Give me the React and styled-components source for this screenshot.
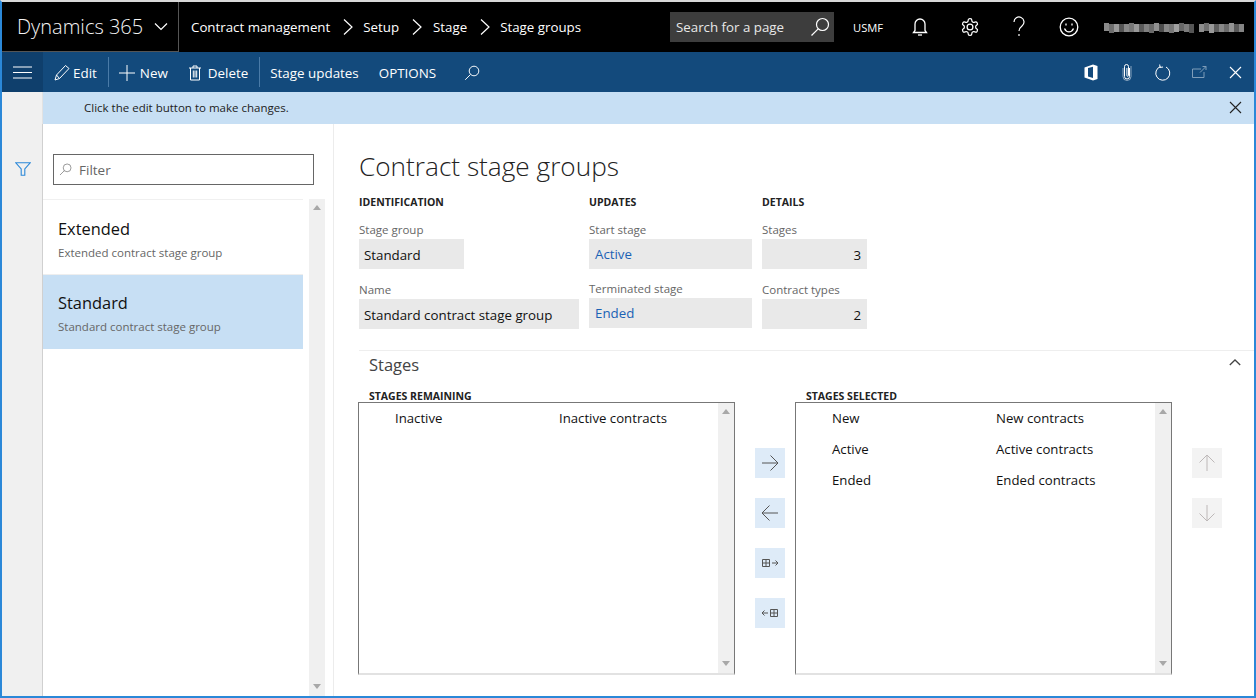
import React from "react";
import styled, { createGlobalStyle } from "styled-components";

const Global = createGlobalStyle`
  html, body { margin: 0; padding: 0; background: #fff; }
  body { font-family: "Open Sans", "Noto Sans", "Liberation Sans", sans-serif; color: #111; overflow: hidden; }
  * { box-sizing: border-box; }
`;

const Frame = styled.div`
  width: 1256px; height: 698px; display: flex; flex-direction: column; overflow: hidden;
  background: #fff; border-left: 2px solid #2b88d8; border-right: 2px solid #2b88d8; border-bottom: 2px solid #2b88d8; border-top: 2px solid #d8d8d8;
`;
const TopBar = styled.header`
  height: 50px; flex: none; background: #000; color: #fff; display: flex; align-items: center; margin-left: -1px; margin-right: -1px;
`;
const Brand = styled.div`
  width: 178px; height: 50px; flex: none; display: flex; align-items: center; padding-left: 15px; border: 1px solid #555; border-top: 0;
  font-size: 20px; font-weight: 300; color: #f4f4f4;
  svg { margin-left: 11px; }
`;
const Crumbs = styled.nav`
  display: flex; align-items: center; margin-left: 12px; font-size: 13.3px; width: 479px;
`;
const Crumb = styled.span` white-space: nowrap; `;
const CrumbSep = styled.span` display: flex; width: ${p => p.$w}px; justify-content: center; `;
const SearchBox = styled.div`
  width: 164px; height: 30px; flex: none; background: #3d3d3d; display: flex; align-items: center; justify-content: space-between; padding: 0 4px 0 6px;
  font-size: 13.3px; color: #e8e8e8; margin-top: 0;
`;
const Company = styled.span` font-size: 11.200px; margin-left: 19px; width: 33px; `;
const TopIcon = styled.span` display: flex; justify-content: center; width: ${p => p.$w || 50}px; margin-left: ${p => p.$ml || 0}px; `;
const Blur = styled.svg` margin-left: 9px; flex: none; margin-top: 1px; `;

const ActionBar = styled.div`
  height: 40px; flex: none; background: #134a7c; color: #fff; display: flex; align-items: center; font-size: 13.4px;
`;
const Hamburger = styled.div`
  width: 41px; height: 40px; flex: none; background: #0f3f6c; display: flex; align-items: center; justify-content: center;
`;
const Action = styled.span`
  display: flex; align-items: center; gap: ${p => p.$gap ?? 5}px; white-space: nowrap; margin-left: ${p => p.$ml || 0}px; flex: none; line-height: 20px; padding-top: 1px;
`;
const ActionSep = styled.span` width: 1px; height: 30px; background: #4a7ba8; flex: none; margin-left: ${p => p.$ml}px; `;
const ActionRight = styled.div` margin-left: auto; display: flex; align-items: center; margin-right: 1px; `;
const RightIcon = styled.span` width: 36px; display: flex; justify-content: center; `;

const Notice = styled.div`
  height: 32px; flex: none; display: flex;
`;
const NoticeGap = styled.div` width: 41px; background: #f0f0f0; flex: none; border-right: 1px solid #e2e2e2; `;
const NoticeBody = styled.div`
  flex: 1; background: #c7dff4; display: flex; align-items: center; justify-content: space-between; padding: 0 12px 1px 41px; font-size: 11.5px; color: #222;
`;

const Main = styled.div` flex: 1; display: flex; min-height: 0; `;
const Rail = styled.div`
  width: 41px; flex: none; background: #f0f0f0; border-right: 1px solid #d0d0d0; display: flex; justify-content: center; padding: 38px 0 0 2px;
`;
const ListPane = styled.aside`
  width: 291px; flex: none; border-right: 1px solid #ececec; display: flex; flex-direction: column;
`;
const FilterWrap = styled.div` height: 75px; flex: none; padding: 30px 0 0 10px; `;
const Filter = styled.div`
  width: 261px; height: 31px; border: 1px solid #666; display: flex; align-items: center; gap: 7px; padding-left: 5px; font-size: 13.5px; color: #666;
`;
const ListBody = styled.div` flex: 1; display: flex; min-height: 0; `;
const Items = styled.div` width: 260px; flex: none; border-top: 1px solid #f0f0f0; `;
const Item = styled.div`
  height: ${p => p.$h}px; padding: ${p => p.$on ? 15 : 16}px 0 0 15px; background: ${p => p.$on ? "#c7dff4" : "#fff"};
  border-bottom: 1px solid ${p => p.$on ? "#c7dff4" : "#eeeeee"};
`;
const ItemTitle = styled.div` font-size: 16.4px; line-height: 26px; color: #111; `;
const ItemSub = styled.div` font-size: 11.5px; line-height: 20px; color: #666; padding-top: 1px; `;
const Scroll = styled.div`
  width: ${p => p.$w}px; flex: none; background: ${p => p.$bg || "#f0f0f0"}; margin-left: ${p => p.$ml || 0}px; display: flex; flex-direction: column; align-items: center; justify-content: space-between;
  padding: 6px 0 7px;
`;
const ArrowUp = styled.span` width: 0; height: 0; border: 4px solid transparent; border-top: 0; border-bottom: 5px solid #a8a8a8; `;
const ArrowDown = styled.span` width: 0; height: 0; border: 4px solid transparent; border-bottom: 0; border-top: 5px solid #a8a8a8; `;

const Content = styled.main` flex: 1; padding: 22px 0 0 25px; min-width: 0; `;
const Title = styled.h1` margin: 0; font-weight: 300; font-size: 26.2px; line-height: 40px; color: #222; white-space: nowrap; `;
const FieldGrid = styled.div` display: flex; margin-top: 9px; `;
const Col = styled.div` width: ${p => p.$w}px; flex: none; `;
const GroupHead = styled.div` font-size: 10.5px; font-weight: 700; line-height: 14px; color: #222; margin-bottom: 14px; white-space: nowrap; `;
const Label = styled.div` font-size: 11.5px; line-height: 14px; color: #666; margin-bottom: 2px; white-space: nowrap; `;
const Value = styled.div`
  width: ${p => p.$w}px; height: 30px; background: #e9e9e9; display: flex; align-items: center; padding: ${p => p.$link ? 0 : 1}px 6px 0 ${p => p.$link ? 6 : 5}px;
  font-size: 13.3px; white-space: nowrap; color: ${p => p.$link ? "#1b62b5" : "#111"}; justify-content: ${p => p.$num ? "flex-end" : "flex-start"};
  margin-bottom: ${p => p.$mb ?? 14}px;
`;
const Section = styled.section` border-top: 1px solid #eee; margin-top: 21px; `;
const SectionHead = styled.div`
  height: 37px; display: flex; align-items: center; justify-content: space-between; padding: 0 13px 11px 10px; font-size: 16.5px; color: #444;
  svg { margin-bottom: 4px; }
`;
const Columns = styled.div` display: flex; align-items: flex-start; margin-left: -1px; `;
const Picker = styled.div` width: 377px; flex: none; `;
const PickHead = styled.div` font-size: 10.5px; font-weight: 700; line-height: 14px; padding-left: 11px; color: #222; margin-top: 1px; white-space: nowrap; `;
const PickBox = styled.div`
  height: 273px; display: flex; border: 1px solid #777; border-bottom: 2px solid #e2e2e2; margin-top: -1px; background: #fff;
`;
const Rows = styled.div` flex: 1; margin-top: -1px; `;
const Row = styled.div` height: 31px; display: flex; align-items: center; font-size: 13.2px; color: #111; `;
const CellA = styled.span` width: 200px; padding-left: 36px; flex: none; `;
const Transfer = styled.div`
  width: 60px; flex: none; display: flex; flex-direction: column; align-items: flex-start; gap: 20px; padding: 60px 0 0 20px;
`;
const Mover = styled.div`
  width: 30px; height: 30px; background: ${p => p.$off ? "#f3f3f3" : "#deebf8"}; display: flex; align-items: center; justify-content: center;
`;

const Chev = ({ s = 14, c = "#fff", w = 1.2 }) => (
  <svg width={s} height={s + 6} viewBox="0 0 14 20" fill="none" stroke={c} strokeWidth={w}><path d="M4 2.5 12 10 4 17.5" /></svg>
);
const Magnifier = ({ s = 20, c = "#fff", w = 1.2 }) => (
  <svg width={s} height={s} viewBox="0 0 20 20" fill="none" stroke={c} strokeWidth={w}><circle cx="12.5" cy="7.5" r="6" /><path d="M8.2 11.8 1.5 18.5" /></svg>
);
const Cross = ({ s = 13, c = "#fff" }) => (
  <svg width={s} height={s} viewBox="0 0 13 13" fill="none" stroke={c} strokeWidth="1.1"><path d="M1 1 12 12M12 1 1 12" /></svg>
);
const Arrow = ({ dir, c = "#555" }) => {
  const r = { right: 0, down: 90, left: 180, up: 270 }[dir];
  return <svg width="18" height="18" viewBox="0 0 18 18" fill="none" stroke={c} strokeWidth="1" style={{ transform: `rotate(${r}deg)` }}><path d="M1 9H17M9.5 1.5 17 9 9.5 16.5" /></svg>;
};
const Bulk = ({ flip }) => (
  <svg width="18" height="10" viewBox="0 0 18 10" fill="none" stroke="#555" strokeWidth="1">
    {flip ? <><path d="M7 5H1M3.5 2.5 1 5 3.5 7.5" /><path d="M9.5 1.5h7v7h-7zM13 1.5v7M9.5 5h7" /></>
      : <><path d="M1.5 1.5h7v7h-7zM5 1.5v7M1.5 5h7" /><path d="M11 5h6M14.5 2.5 17 5 14.5 7.5" /></>}
  </svg>
);
const blurCols = ["#8a8a8a","#6e6e6e","#9a9a9a","#555","#888","#777","#999","#5a5a5a","#808080","#6a6a6a","#909090","#4e4e4e","#888","#777","#a0a0a0","#666","#7c7c7c","#555","#000","#8e8e8e","#707070","#999","#5e5e5e","#888","#6b6b6b","#929292","#585858","#848484"];

const Remaining = [["Inactive", "Inactive contracts"]];
const Selected = [["New", "New contracts"], ["Active", "Active contracts"], ["Ended", "Ended contracts"]];

const ListBox = ({ head, rows }) => (
  <Picker>
    <PickHead>{head}</PickHead>
    <PickBox>
      <Rows>{rows.map(r => <Row key={r[0]}><CellA>{r[0]}</CellA><span>{r[1]}</span></Row>)}</Rows>
      <Scroll $w={16}><ArrowUp /><ArrowDown /></Scroll>
    </PickBox>
  </Picker>
);

export default function App() {
  return (
    <Frame>
      <Global />
      <TopBar>
        <Brand>Dynamics 365
          <svg width="14" height="9" viewBox="0 0 14 9" fill="none" stroke="#fff" strokeWidth="1.2"><path d="M1 1.5 7 7.5 13 1.5" /></svg>
        </Brand>
        <Crumbs>
          <Crumb>Contract management</Crumb><CrumbSep $w={33}><Chev /></CrumbSep>
          <Crumb>Setup</Crumb><CrumbSep $w={34}><Chev /></CrumbSep>
          <Crumb>Stage</Crumb><CrumbSep $w={33}><Chev /></CrumbSep>
          <Crumb>Stage groups</Crumb>
        </Crumbs>
        <SearchBox>Search for a page<Magnifier /></SearchBox>
        <Company>USMF</Company>
        <TopIcon $ml={9}>
          <svg width="16" height="20" viewBox="0 0 16 20" fill="none" stroke="#fff" strokeWidth="1.3"><path d="M1.5 15.5H14.5L13 13.5V7a5 5 0 0 0-10 0v6.5z" /><path d="M6 18h4" /></svg>
        </TopIcon>
        <TopIcon>
          <svg width="20" height="20" viewBox="0 0 24 24" fill="none" stroke="#fff" strokeWidth="1.5" strokeLinejoin="round"><path d="M12.2 2h-.4a2 2 0 0 0-2 2v.2a2 2 0 0 1-1 1.7l-.4.3a2 2 0 0 1-2 0l-.2-.1a2 2 0 0 0-2.7.7l-.2.4a2 2 0 0 0 .7 2.7l.2.1a2 2 0 0 1 1 1.7v.6a2 2 0 0 1-1 1.7l-.2.1a2 2 0 0 0-.7 2.7l.2.4a2 2 0 0 0 2.7.7l.2-.1a2 2 0 0 1 2 0l.4.3a2 2 0 0 1 1 1.7v.2a2 2 0 0 0 2 2h.4a2 2 0 0 0 2-2v-.2a2 2 0 0 1 1-1.7l.4-.3a2 2 0 0 1 2 0l.2.1a2 2 0 0 0 2.7-.7l.2-.4a2 2 0 0 0-.7-2.7l-.2-.1a2 2 0 0 1-1-1.7v-.6a2 2 0 0 1 1-1.7l.2-.1a2 2 0 0 0 .7-2.7l-.2-.4a2 2 0 0 0-2.7-.7l-.2.1a2 2 0 0 1-2 0l-.4-.3a2 2 0 0 1-1-1.7V4a2 2 0 0 0-2-2z" /><circle cx="12" cy="12" r="3.5" /></svg>
        </TopIcon>
        <TopIcon $w={48}>
          <svg width="14" height="22" viewBox="0 0 14 22" fill="none" stroke="#fff" strokeWidth="1.2"><path d="M2 6a5 5 0 1 1 8.2 3.8C8 11.6 7 12.6 7 15" /><path d="M7 18v2" /></svg>
        </TopIcon>
        <TopIcon $w={52}>
          <svg width="20" height="20" viewBox="0 0 20 20" fill="none" stroke="#fff" strokeWidth="1.3"><circle cx="10" cy="10" r="8.8" /><path d="M5.500 11.500c1 2.400 2.600 3.400 4.500 3.400s3.500-1 4.500-3.400" /><path d="M7 6.500v2M13 6.500v2" /></svg>
        </TopIcon>
        <Blur width="141" height="12" viewBox="0 0 141 12">
          {blurCols.map((c, i) => <rect key={i} x={i * 5} y={i % 5 === 0 ? 1 : 2} width={i === 18 ? 2 : 5} height={i % 4 === 1 ? 9 : 8} fill={c} />)}
        </Blur>
      </TopBar>

      <ActionBar>
        <Hamburger>
          <svg width="19" height="13" viewBox="0 0 19 13" stroke="#fff" strokeWidth="1.2"><path d="M0 1H19M0 6.500H19M0 12H19" /></svg>
        </Hamburger>
        <Action $ml={11} $gap={3}>
          <svg width="16" height="17" viewBox="0 0 16 17" fill="none" stroke="#fff" strokeWidth="1"><path d="M1 16 2.500 11 11.500 1.500 15 4.500 5.500 14.500zM2.500 11 5.500 14.500" /></svg>Edit
        </Action>
        <ActionSep $ml={11} />
        <Action $ml={10} $gap={5}>
          <svg width="16" height="16" viewBox="0 0 16 16" stroke="#fff" strokeWidth="1"><path d="M8 0V16M0 8H16" /></svg>New
        </Action>
        <Action $ml={20} $gap={6}>
          <svg width="14" height="16" viewBox="0 0 14 16" fill="none" stroke="#fff" strokeWidth="1"><path d="M1 3H13M5 3V1h4v2M2.500 3v12h9V3M5.300 5.500v7M7 5.500v7M8.700 5.500v7" /></svg>Delete
        </Action>
        <ActionSep $ml={11} />
        <Action $ml={10}>Stage updates</Action>
        <Action $ml={20}>OPTIONS</Action>
        <Action $ml={28}><Magnifier s={16} /></Action>
        <ActionRight>
          <RightIcon>
            <svg width="14" height="17" viewBox="0 0 14 17"><path d="M0.500 3.500 9 0.500 13.500 2V15L9 16.500 0.500 13.500zM9 2.800 4 4V12.500L9 14z" fill="#fff" fillRule="evenodd" /></svg>
          </RightIcon>
          <RightIcon>
            <svg width="10" height="18" viewBox="0 0 10 18" fill="none" stroke="#fff" strokeWidth="1"><path d="M7.500 5v8.500a2.500 2.500 0 0 1-5 0V3.500a2 2 0 0 1 4 0V12.500a.8.8 0 0 1-1.600 0V5" /><path d="M1 5v8.500a4 4 0 0 0 8 0V3" strokeOpacity=".5" /></svg>
          </RightIcon>
          <RightIcon>
            <svg width="16" height="17" viewBox="0 0 16 17" fill="none" stroke="#fff" strokeWidth="1"><path d="M5.500 2.600A7 7 0 1 0 11 3" /><path d="M5 .5V3.500H8" transform="rotate(-8 5 3)" /></svg>
          </RightIcon>
          <RightIcon>
            <svg width="15" height="12" viewBox="0 0 15 12" fill="none" stroke="#7f9db9" strokeWidth="1"><path d="M9 3H.5V11.500H12V6M8 6.500 14 .5M10.500.5H14V4" /></svg>
          </RightIcon>
          <RightIcon><Cross /></RightIcon>
        </ActionRight>
      </ActionBar>

      <Notice>
        <NoticeGap />
        <NoticeBody>Click the edit button to make changes.<Cross c="#222" /></NoticeBody>
      </Notice>

      <Main>
        <Rail>
          <svg width="16" height="14" viewBox="0 0 16 14" fill="none" stroke="#2b88d8" strokeWidth="1.100"><path d="M.800.800H15.200L9.800 7V13.200H6.200V7z" /></svg>
        </Rail>
        <ListPane>
          <FilterWrap>
            <Filter><Magnifier s={13} c="#666" w={1} />Filter</Filter>
          </FilterWrap>
          <ListBody>
            <Items>
              <Item $h={75}><ItemTitle>Extended</ItemTitle><ItemSub>Extended contract stage group</ItemSub></Item>
              <Item $h={74} $on><ItemTitle>Standard</ItemTitle><ItemSub>Standard contract stage group</ItemSub></Item>
            </Items>
            <Scroll $w={16} $ml={6}><ArrowUp /><ArrowDown /></Scroll>
          </ListBody>
        </ListPane>
        <Content>
          <Title>Contract stage groups</Title>
          <FieldGrid>
            <Col $w={230}>
              <GroupHead>IDENTIFICATION</GroupHead>
              <Label>Stage group</Label><Value $w={105}>Standard</Value>
              <Label>Name</Label><Value $w={220} $mb={0}>Standard contract stage group</Value>
            </Col>
            <Col $w={173}>
              <GroupHead>UPDATES</GroupHead>
              <Label>Start stage</Label><Value $w={163} $link $mb={13}>Active</Value>
              <Label>Terminated stage</Label><Value $w={163} $link $mb={0}>Ended</Value>
            </Col>
            <Col $w={110}>
              <GroupHead>DETAILS</GroupHead>
              <Label>Stages</Label><Value $w={105} $num>3</Value>
              <Label>Contract types</Label><Value $w={105} $num $mb={0}>2</Value>
            </Col>
          </FieldGrid>
          <Section>
            <SectionHead>Stages
              <svg width="12" height="7" viewBox="0 0 12 7" fill="none" stroke="#444" strokeWidth="1.300"><path d="M.800 6 6 1 11.200 6" /></svg>
            </SectionHead>
            <Columns>
              <ListBox head="STAGES REMAINING" rows={Remaining} />
              <Transfer>
                <Mover><Arrow dir="right" /></Mover>
                <Mover><Arrow dir="left" /></Mover>
                <Mover><Bulk /></Mover>
                <Mover><Bulk flip /></Mover>
              </Transfer>
              <ListBox head="STAGES SELECTED" rows={Selected} />
              <Transfer>
                <Mover $off><Arrow dir="up" c="#bdb8b8" /></Mover>
                <Mover $off><Arrow dir="down" c="#bdb8b8" /></Mover>
              </Transfer>
            </Columns>
          </Section>
        </Content>
      </Main>
    </Frame>
  );
}
